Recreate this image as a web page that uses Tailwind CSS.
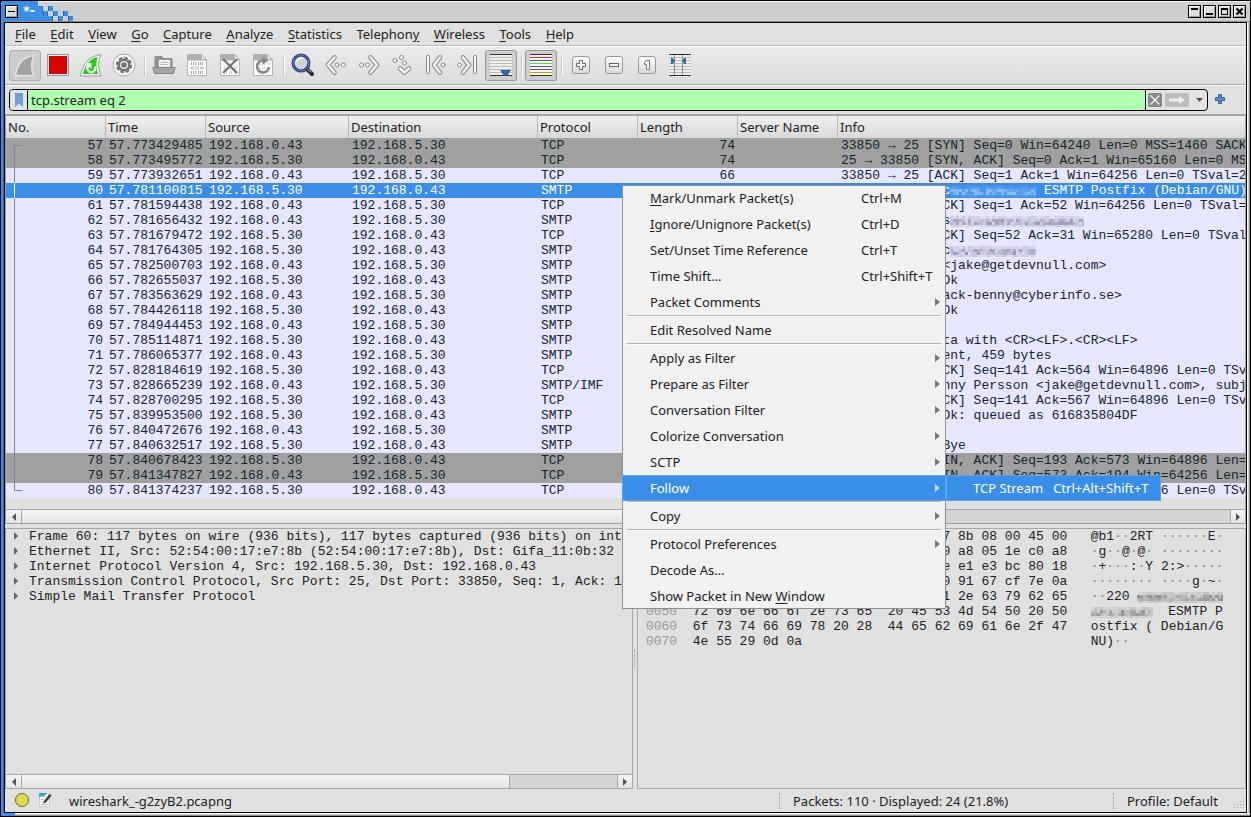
<!DOCTYPE html>
<html lang="en">
<head>
<meta charset="utf-8">
<title>*wireshark_-g2zyB2.pcapng</title>
<script src="https://cdn.jsdelivr.net/npm/@tailwindcss/browser@4"></script>
</head>
<body class="h-screen overflow-hidden bg-black font-['Noto_Sans',sans-serif] text-[13px] leading-[18px] text-[#222]">
<svg width="0" height="0" class="absolute">
  <defs>
    <linearGradient id="glass" x1="0" y1="0" x2="0" y2="1"><stop offset="0" stop-color="#fff"/><stop offset="1" stop-color="#d8d8d8"/></linearGradient>
    <symbol id="doc" viewBox="0 0 22 24"><path d="M1.500 1.500H15.500L20.500 6.500V22.500H1.500Z" fill="#fafafa" stroke="#b4b4b2"/><path d="M2 2H15.500V7H20V7.500H2Z" fill="#b0b0ae"/><path d="M15.500 1.500V6.500H20.500Z" fill="#e6e6e6" stroke="#b4b4b2"/></symbol>
  </defs>
</svg>
<div class="flex h-full flex-col border border-black bg-[#cecece]">

  <header class="flex h-[21px] shrink-0 items-stretch border-b border-b-[#888] bg-[#cecece] shadow-[inset_0_1px_0_#f4f4f4]">
    <div class="flex w-[37px] items-center bg-[#3a8ee8] pl-1">
      <button aria-label="Window menu" class="size-[13px] border border-black bg-[#ddd]"><svg class="block size-[11px]" viewBox="0 0 11 11"><path d="M.5 10.500V.5H10.500" stroke="#fff" fill="none"/><path d="M10.500 1V10.500H1" stroke="#999" fill="none"/><rect x="2" y="5" width="7" height="1"/></svg></button>
      <span class="pl-[5px] font-['DejaVu_Sans',sans-serif] text-[13px] leading-[18px] font-bold text-white">*-</span>
    </div>
    <svg width="36" height="20" viewBox="0 0 36 20" shape-rendering="crispEdges"><g fill="#3a8ee8"><path d="M0 5H5V10H10V15H15V20H0Z"/><rect x="10" y="5" width="5" height="5"/><rect x="15" y="10" width="5" height="5"/><rect x="20" y="15" width="5" height="5"/><rect x="25" y="10" width="5" height="5"/><rect x="30" y="15" width="5" height="5"/></g><path d="M10.500 5V10M15.500 10V15M20.500 15V20M25.500 10V15M30.500 15V20M5.500 11V15M4.500 5V10M9.500 11V15M14.500 15V20" stroke="#2a62a4"/></svg>
    <div class="ml-auto flex items-center gap-[2px] pr-1">
      <button aria-label="Shade" class="size-[13px] border border-black bg-[#ddd]"><svg class="block size-[11px]" viewBox="0 0 11 11"><path d="M.5 10.500V.5H10.500" stroke="#fff" fill="none"/><path d="M10.500 1V10.500H1" stroke="#999" fill="none"/><rect x="2" y="2" width="7" height="2"/></svg></button>
      <button aria-label="Minimize" class="size-[13px] border border-black bg-[#ddd]"><svg class="block size-[11px]" viewBox="0 0 11 11"><path d="M.5 10.500V.5H10.500" stroke="#fff" fill="none"/><path d="M10.500 1V10.500H1" stroke="#999" fill="none"/><rect x="2" y="7" width="7" height="2"/></svg></button>
      <button aria-label="Maximize" class="size-[13px] border border-black bg-[#ddd]"><svg class="block size-[11px]" viewBox="0 0 11 11"><path d="M.5 10.500V.5H10.500" stroke="#fff" fill="none"/><path d="M10.500 1V10.500H1" stroke="#999" fill="none"/><path d="M2 2H9V9H2ZM3 4V8H8V4Z" fill-rule="evenodd"/></svg></button>
      <button aria-label="Close" class="size-[13px] border border-black bg-[#ddd]"><svg class="block size-[11px]" viewBox="0 0 11 11"><path d="M.5 10.500V.5H10.500" stroke="#fff" fill="none"/><path d="M10.500 1V10.500H1" stroke="#999" fill="none"/><path d="M2.500 2.500L8.500 8.500M8.500 2.500L2.500 8.500" stroke="#000" stroke-width="2"/></svg></button>
    </div>
  </header>

  <div class="flex min-h-0 flex-1">
    <div class="w-[3px] shrink-0 border-r border-r-[#2a6cb8] bg-[#3a8ee8]"></div>
    <main class="flex min-w-0 flex-1 flex-col border border-black bg-[#e0e0e0]">

      <nav class="flex h-[23px] shrink-0 items-center border-b border-b-[#bdbdbd] pl-[3px]" aria-label="Main menu">
        <div class="flex w-[573px] justify-between">
        <button class="px-[7px]"><u class="underline-offset-2">F</u>ile</button>
        <button class="px-[7px]"><u class="underline-offset-2">E</u>dit</button>
        <button class="px-[7px]"><u class="underline-offset-2">V</u>iew</button>
        <button class="px-[7px]"><u class="underline-offset-2">G</u>o</button>
        <button class="px-[7px]"><u class="underline-offset-2">C</u>apture</button>
        <button class="px-[7px]"><u class="underline-offset-2">A</u>nalyze</button>
        <button class="px-[7px]"><u class="underline-offset-2">S</u>tatistics</button>
        <button class="px-[7px]">Telephon<u class="underline-offset-2">y</u></button>
        <button class="px-[7px]"><u class="underline-offset-2">W</u>ireless</button>
        <button class="px-[7px]"><u class="underline-offset-2">T</u>ools</button>
        <button class="px-[7px]"><u class="underline-offset-2">H</u>elp</button>
        </div>
      </nav>

      <div role="toolbar" class="flex h-[39px] shrink-0 items-center gap-px border-t border-b border-t-white border-b-[#a8a8a8] bg-linear-to-b from-[#ebebeb] to-[#dcdcdc] pl-1">
        <button aria-label="Start capture" class="grid h-[31px] w-8 place-items-center rounded-[3px] border border-[#b0b0b0] bg-[#cdcdcd]"><svg width="22" height="23" viewBox="0 0 22 23"><path d="M1.500 21.500C3 10 9 3 20 1.500C17 8 17 15 19.500 21.500Z" fill="#a3a3a3" stroke="#e4e4e4" stroke-width="1.600"/></svg></button>
        <button aria-label="Stop capture" class="grid h-[31px] w-8 place-items-center"><svg width="22" height="23" viewBox="0 0 22 23"><rect x=".5" y=".5" width="21" height="21" fill="#f2f2f2" stroke="#999"/><rect x="2" y="2" width="18" height="18" fill="#d90000"/></svg></button>
        <button aria-label="Restart capture" class="grid h-[31px] w-8 place-items-center"><svg width="24" height="25" viewBox="0 0 24 25"><path d="M1.500 23C3.500 11 10 3 22 1.500C19 8 19 15 22 23Z" fill="#f4f4f4" stroke="#999"/><path d="M4 21C6 12 11 5.500 18.500 4C17 9 17 15 19 21Z" fill="#1fcf11"/><path d="M9.300 12.500A4 4 0 1 0 16 13.500" fill="none" stroke="#fff" stroke-width="2.200"/><path d="M6.500 10H12.500V16Z" fill="#fff"/></svg></button>
        <button aria-label="Capture options" class="grid h-[31px] w-8 place-items-center"><svg width="24" height="25" viewBox="0 0 24 25"><circle cx="12" cy="12" r="11" fill="#f6f6f6" stroke="#aaa"/><circle cx="12" cy="12" r="7.200" fill="none" stroke="#737373" stroke-width="2" stroke-dasharray="3.650 2"/><circle cx="12" cy="12" r="5.300" fill="none" stroke="#737373" stroke-width="2.600"/><circle cx="12" cy="12" r="2.800" fill="#737373"/></svg></button>
        <span class="h-5 w-[6px] shrink-0"><i class="ml-[3px] block h-5 w-[2px] border-r border-l border-r-white border-l-[#c8c8c8]"></i></span>
        <button aria-label="Open file" class="grid h-[31px] w-8 place-items-center"><svg width="24" height="23" viewBox="0 0 24 23"><path d="M2.500 14V2H10L11.500 4H20.500V14Z" fill="#8e8e8c"/><rect x="6.500" y="5.500" width="12" height="10" fill="#f0f0f0" stroke="#a0a0a0"/><path d="M8.500 8.500H16.500M8.500 10.500H16.500" stroke="#bbb"/><path d="M.8 13.500H23.200L21.500 19.500H2.500Z" fill="#a6a6a4" stroke="#858583"/></svg></button>
        <button aria-label="Save file" class="grid h-[31px] w-8 place-items-center"><svg width="22" height="25" viewBox="0 0 22 25"><use href="#doc" width="22" height="24"/><g stroke="#a8a8a8" fill="none" stroke-width="3"><path d="M5 10.500H18" stroke-dasharray="1 1 1 1 1 2"/><path d="M4.500 15H18" stroke-dasharray="1 1 1 2"/><path d="M5 19.500H18" stroke-dasharray="1 1 1 1 1 2"/></g></svg></button>
        <button aria-label="Close file" class="grid h-[31px] w-8 place-items-center"><svg width="22" height="25" viewBox="0 0 22 25"><use href="#doc" width="22" height="24"/><path d="M5 15H18M5 19.500H18" stroke="#ccc" stroke-width="3" stroke-dasharray="1 1 1 2"/><path d="M4 6L18 20M18 6L4 20" stroke="#777" stroke-width="2.400"/></svg></button>
        <button aria-label="Reload file" class="grid h-[31px] w-8 place-items-center"><svg width="22" height="25" viewBox="0 0 22 25"><use href="#doc" width="22" height="24"/><path d="M5 11H18M5 15.500H18" stroke="#ccc" stroke-width="3" stroke-dasharray="1 1 1 2"/><path d="M11 7.500A6 6 0 1 0 17 14" fill="none" stroke="#858585" stroke-width="2.400"/><path d="M10.500 3.500L16.500 7.500L10.500 11.500Z" fill="#858585"/></svg></button>
        <span class="h-5 w-[6px] shrink-0"><i class="ml-[3px] block h-5 w-[2px] border-r border-l border-r-white border-l-[#c8c8c8]"></i></span>
        <button aria-label="Find packet" class="grid h-[31px] w-8 place-items-center"><svg width="24" height="25" viewBox="0 0 24 25"><path d="M15.500 15.500L21 21" stroke="#2b2b2b" stroke-width="4" stroke-linecap="round"/><path d="M15.500 15L20 19" stroke="#999" stroke-width="1.200"/><circle cx="10" cy="10" r="8" fill="#cfd2d8" stroke="#22397c" stroke-width="3"/><circle cx="10" cy="10" r="8" fill="none" stroke="#6683c9"/><path d="M5.500 9A5 5 0 0 1 12 5.500" stroke="#fff" fill="none" stroke-width="1.500"/></svg></button>
        <button aria-label="Previous packet" class="grid h-[31px] w-8 place-items-center"><svg width="24" height="25" viewBox="0 0 24 25" fill="none" stroke-linecap="round" stroke-linejoin="round"><path d="M10.500 4.500L4 12L10.500 19.500" stroke="#858585" stroke-width="4.500"/><path d="M10.500 4.500L4 12L10.500 19.500" stroke="#f4f4f4" stroke-width="2.600"/><g fill="#fff" stroke="#8c8c8c"><circle cx="13" cy="12" r="2"/><circle cx="19.500" cy="12" r="2"/></g></svg></button>
        <button aria-label="Next packet" class="grid h-[31px] w-8 place-items-center"><svg width="24" height="25" viewBox="0 0 24 25" fill="none" stroke-linecap="round" stroke-linejoin="round"><path d="M13.500 4.500L20 12L13.500 19.500" stroke="#858585" stroke-width="4.500"/><path d="M13.500 4.500L20 12L13.500 19.500" stroke="#f4f4f4" stroke-width="2.600"/><g fill="#fff" stroke="#8c8c8c"><circle cx="10.500" cy="12" r="2"/><circle cx="4.500" cy="12" r="2"/></g></svg></button>
        <button aria-label="Go to packet" class="grid h-[31px] w-8 place-items-center"><svg width="24" height="25" viewBox="0 0 24 25" fill="none" stroke-linecap="round" stroke-linejoin="round"><path d="M10 15.500L14.500 19.500L19 15.500" stroke="#858585" stroke-width="4.500"/><path d="M10 15.500L14.500 19.500L19 15.500" stroke="#f4f4f4" stroke-width="2.600"/><g fill="#fff" stroke="#8c8c8c"><circle cx="5" cy="7.500" r="2"/><circle cx="11.500" cy="4.500" r="2"/><circle cx="14.500" cy="10" r="2"/></g></svg></button>
        <button aria-label="First packet" class="grid h-[31px] w-8 place-items-center"><svg width="24" height="25" viewBox="0 0 24 25" fill="none" stroke-linecap="round" stroke-linejoin="round"><rect x="3.500" y="2.500" width="3" height="18" rx="1" fill="#f4f4f4" stroke="#858585"/><path d="M17 4.500L11 12L17 19.500" stroke="#858585" stroke-width="4.500"/><path d="M17 4.500L11 12L17 19.500" stroke="#f4f4f4" stroke-width="2.600"/><circle cx="20" cy="12" r="2" fill="#fff" stroke="#8c8c8c"/></svg></button>
        <button aria-label="Last packet" class="grid h-[31px] w-8 place-items-center"><svg width="24" height="25" viewBox="0 0 24 25" fill="none" stroke-linecap="round" stroke-linejoin="round"><rect x="17.500" y="2.500" width="3" height="18" rx="1" fill="#f4f4f4" stroke="#858585"/><path d="M7 4.500L13 12L7 19.500" stroke="#858585" stroke-width="4.500"/><path d="M7 4.500L13 12L7 19.500" stroke="#f4f4f4" stroke-width="2.600"/><circle cx="3.500" cy="12" r="2" fill="#fff" stroke="#8c8c8c"/></svg></button>
        <button aria-label="Auto scroll" aria-pressed="true" class="grid h-[31px] w-8 place-items-center rounded-[3px] border border-[#999] bg-[#cdcdcd]"><svg width="22" height="23" viewBox="0 0 22 23"><rect width="22" height="22" fill="#eeeeec"/><path d="M0 3.500H22M0 6.500H22M0 9.500H22M0 12.500H22M0 15.500H22M0 18.500H22" stroke="#babdb6"/><path d="M0 .5H22M0 21.500H22" stroke="#2e3436"/><path d="M10 16H21L17.500 21.500H13.500Z" fill="#3465a4"/></svg></button>
        <span class="h-5 w-[6px] shrink-0"><i class="ml-[3px] block h-5 w-[2px] border-r border-l border-r-white border-l-[#c8c8c8]"></i></span>
        <button aria-label="Colorize" aria-pressed="true" class="grid h-[31px] w-8 place-items-center rounded-[3px] border border-[#999] bg-[#cdcdcd]"><svg width="22" height="23" viewBox="0 0 22 23"><rect width="22" height="22" fill="#f4f4f2"/><path d="M0 .5H22M0 21.500H22" stroke="#2e3436"/><path d="M0 3.500H22" stroke="#ef2929"/><path d="M0 6.500H22" stroke="#3465a4"/><path d="M0 9.500H22" stroke="#73d216"/><path d="M0 12.500H22" stroke="#3465a4"/><path d="M0 15.500H22" stroke="#75507b"/><path d="M0 18.500H22" stroke="#c4a000"/></svg></button>
        <span class="h-5 w-[6px] shrink-0"><i class="ml-[3px] block h-5 w-[2px] border-r border-l border-r-white border-l-[#c8c8c8]"></i></span>
        <button aria-label="Zoom in" class="grid h-[31px] w-8 place-items-center"><svg width="20" height="21" viewBox="0 0 20 21"><rect x="1.500" y="1.500" width="17" height="17" rx="2.500" fill="url(#glass)" stroke="#999"/><path d="M8.500 5.500H11.500V8.500H14.500V11.500H11.500V14.500H8.500V11.500H5.500V8.500H8.500Z" fill="#fff" stroke="#666"/></svg></button>
        <button aria-label="Zoom out" class="grid h-[31px] w-8 place-items-center"><svg width="20" height="21" viewBox="0 0 20 21"><rect x="1.500" y="1.500" width="17" height="17" rx="2.500" fill="url(#glass)" stroke="#999"/><rect x="5.500" y="8.500" width="9" height="3" fill="#fff" stroke="#666"/></svg></button>
        <button aria-label="Normal size" class="grid h-[31px] w-8 place-items-center"><svg width="20" height="21" viewBox="0 0 20 21"><rect x="1.500" y="1.500" width="17" height="17" rx="2.500" fill="url(#glass)" stroke="#999"/><path d="M9.500 5.500H12.500V14.500H9.500V9.500H7.500V7.500Z" fill="#fff" stroke="#777"/></svg></button>
        <button aria-label="Resize columns" class="grid h-[31px] w-8 place-items-center"><svg width="22" height="23" viewBox="0 0 22 23"><rect width="22" height="22" fill="#eeeeec"/><path d="M0 3.500H22M0 6.500H22M0 9.500H22M0 12.500H22M0 15.500H22M0 18.500H22" stroke="#babdb6"/><path d="M0 .5H22M0 21.500H22" stroke="#2e3436"/><path d="M5.500 1V21M13.500 1V21" stroke="#888a85"/><path d="M2 4H3.500L6 6.500L3.500 10H2ZM17 4H15.500L13 6.500L15.500 10H17Z" fill="#3465a4"/></svg></button>
      </div>

      <div class="flex h-[30px] shrink-0 items-center border-t border-b border-t-white border-b-[#a8a8a8] pr-5 pl-1">
        <div class="flex h-[22px] min-w-0 flex-1 overflow-hidden rounded-[4px] border border-black bg-[#e3e3e3]">
          <button aria-label="Bookmarks" class="grid w-[18px] shrink-0 place-items-center border-r border-black bg-[#e2e2ea]"><svg width="8" height="14" viewBox="0 0 8 14"><path d="M0 0H8V14L4 10.500L0 14Z" fill="#729fcf"/></svg></button>
          <input aria-label="Display filter" value="tcp.stream eq 2" class="min-w-0 flex-1 bg-[#afffaf] pl-[3px] outline-none">
          <div class="flex w-[62px] shrink-0 items-center border-l border-black pl-[2px]">
            <button aria-label="Clear"><svg class="block" width="14" height="14" viewBox="0 0 14 14"><rect width="14" height="14" rx="1.500" fill="#888a85"/><path d="M2.500 2.500L11.500 11.500M11.500 2.500L2.500 11.500" stroke="#f4f4f2" stroke-width="1.300"/></svg></button>
            <button aria-label="Apply" class="ml-[3px]"><svg class="block" width="24" height="14" viewBox="0 0 24 14"><rect width="24" height="14" rx="2" fill="#bcbcba"/><path d="M4 5.500H14V3L20 7L14 11V8.500H4Z" fill="#eee"/></svg></button>
            <button aria-label="Recent filters" class="ml-[7px]"><svg class="block" width="7" height="4" viewBox="0 0 7 4"><path d="M0 0H7L3.500 4Z" fill="#555"/></svg></button>
          </div>
        </div>
        <button aria-label="Add filter button" class="ml-[6px] shrink-0"><svg class="block" width="12" height="14" viewBox="0 0 12 14"><path d="M4.500 1.500H7.500V4.500H10.500V7.500H7.500V10.500H4.500V7.500H1.500V4.500H4.500Z" fill="#5c87c0" stroke="#3465a4"/></svg></button>
      </div>

      <section class="relative shrink-0 border border-[#a0a0a0]" aria-label="Packet list">
        <table class="w-full table-fixed border-separate border-spacing-0">
          <colgroup><col class="w-[100px]"><col class="w-[100px]"><col class="w-[143px]"><col class="w-[189px]"><col class="w-[100px]"><col class="w-[100px]"><col class="w-[100px]"><col></colgroup>
          <thead class="bg-linear-to-b from-[#f0f0f0] to-[#d9d9d9]">
            <tr class="h-[22px] text-left">
              <th class="border-r border-[#b8b8b8] p-0 pl-[2px] font-normal">No.</th>
              <th class="border-r border-[#b8b8b8] p-0 pl-[2px] font-normal">Time</th>
              <th class="border-r border-[#b8b8b8] p-0 pl-[2px] font-normal">Source</th>
              <th class="border-r border-[#b8b8b8] p-0 pl-[2px] font-normal">Destination</th>
              <th class="border-r border-[#b8b8b8] p-0 pl-[2px] font-normal">Protocol</th>
              <th class="border-r border-[#b8b8b8] p-0 pl-[2px] font-normal">Length</th>
              <th class="border-r border-[#b8b8b8] p-0 pl-[2px] font-normal">Server Name</th>
              <th class="p-0 pl-[2px] font-normal">Info</th>
            </tr>
          </thead>
          <tbody id="packets" class="font-['Liberation_Mono',monospace] leading-[15px] text-[#12272e]"></tbody>
        </table>
        <svg class="absolute top-[22px] left-2" width="8" height="360" viewBox="0 0 8 360" fill="none" stroke="#7f888c"><path d="M8 7.500H.5V352.500H8"/><path d="M.5 45V60" stroke="#fff"/></svg>
        <div class="h-[11px]"></div>
        <div role="scrollbar" aria-label="Packet list scroll" aria-controls="packets" aria-valuenow="0" class="flex h-[14px] border-t border-[#a8a8a8] bg-[#d4d4d4]">
          <button aria-label="Left" class="grid w-4 place-items-center border-r border-[#a8a8a8] bg-linear-to-b from-[#f6f6f6] to-[#e2e2e2]"><svg width="4" height="8" viewBox="0 0 4 8"><path d="M4 0V8L0 4Z" fill="#555"/></svg></button>
          <div class="w-[70%] border-r border-[#a8a8a8] bg-linear-to-b from-[#f6f6f6] to-[#e2e2e2]"></div>
          <button aria-label="Right" class="ml-auto grid w-[15px] place-items-center border-l border-[#a8a8a8] bg-linear-to-b from-[#f6f6f6] to-[#e2e2e2]"><svg width="4" height="8" viewBox="0 0 4 8"><path d="M0 0V8L4 4Z" fill="#555"/></svg></button>
        </div>
      </section>

      <div class="h-1 shrink-0"></div>
      <div class="flex min-h-0 flex-1">
        <section class="flex min-w-0 flex-[628] flex-col overflow-hidden border border-[#a8a8a8]" aria-label="Packet details">
          <ul id="details" class="min-h-0 flex-1 overflow-hidden font-['Liberation_Mono',monospace] leading-[15px] whitespace-pre"></ul>
          <div role="scrollbar" aria-label="Details scroll" aria-controls="details" aria-valuenow="0" class="flex h-[14px] shrink-0 border-t border-[#a8a8a8] bg-[#d4d4d4]">
            <button aria-label="Left" class="grid w-4 place-items-center border-r border-[#a8a8a8] bg-linear-to-b from-[#f6f6f6] to-[#e2e2e2]"><svg width="4" height="8" viewBox="0 0 4 8"><path d="M4 0V8L0 4Z" fill="#555"/></svg></button>
            <div class="w-[78%] border-r border-[#a8a8a8] bg-linear-to-b from-[#f6f6f6] to-[#e2e2e2]"></div>
            <button aria-label="Right" class="ml-auto grid w-[15px] place-items-center border-l border-[#a8a8a8] bg-linear-to-b from-[#f6f6f6] to-[#e2e2e2]"><svg width="4" height="8" viewBox="0 0 4 8"><path d="M0 0V8L4 4Z" fill="#555"/></svg></button>
          </div>
        </section>
        <div class="flex w-1 shrink-0 items-center justify-center"><i class="block h-[18px] border-l border-dotted border-[#999]"></i></div>
        <section class="min-w-0 flex-[609] overflow-hidden border border-[#a8a8a8]" aria-label="Packet bytes">
          <div id="bytes" class="pl-2 font-['Liberation_Mono',monospace] leading-[15px] whitespace-pre"></div>
        </section>
      </div>

      <footer class="flex h-[23px] shrink-0 items-center pt-px">
        <div class="flex min-w-0 flex-1 items-center pl-[9px]">
          <button aria-label="Expert information"><svg class="block" width="16" height="16" viewBox="0 0 16 16"><circle cx="8" cy="7" r="6.500" fill="#dddc55" stroke="#66672e"/></svg></button>
          <button aria-label="Capture comment" class="ml-2"><svg class="block" width="14" height="16" viewBox="0 0 14 16"><path d="M1.500 .5H11.500V13.500H1.500Z" fill="#f6f6f4" stroke="#c8c8c6"/><path d="M1 0H9L6 3.500H3L1 4.500Z" fill="#3b9fd6"/><path d="M3 6.500H6M3 8.500H5M3 11.500H10" stroke="#bbb"/><path d="M6 8L11.500 1L13.500 2.500L8 9.500L5 10.500Z" fill="#3a3f41"/></svg></button>
          <span class="pl-[17px]">wireshark_-g2zyB2.pcapng</span>
        </div>
        <div class="flex w-[334px] items-center"><i class="block h-4 border-l border-dotted border-[#999]"></i><span class="pl-[13px]">Packets: 110 · Displayed: 24 (21.8%)</span></div>
        <div class="flex w-[133px] items-center"><i class="block h-4 border-l border-dotted border-[#999]"></i><span class="pl-[13px]">Profile: Default</span>
          <svg class="mt-1 mr-px ml-auto" width="11" height="11" viewBox="0 0 11 11" stroke="#a8a8a8" stroke-dasharray="1 2"><path d="M9 .5H11M6 3.500H11M3 6.500H11M0 9.500H11"/></svg></div>
      </footer>
    </main>
    <div class="w-[3px] shrink-0 border-r border-l border-r-[#888] border-l-white bg-[#cecece]"></div>
  </div>
  <div class="flex h-[3px] shrink-0 border-t border-b border-t-white border-b-[#888] bg-[#cecece]"><i class="-my-px block w-[14px] bg-[#3a8ee8]"></i></div>
</div>

<div role="menu" id="menu" class="absolute top-[185px] left-[622px] w-[324px] bg-[#f1f1f1] shadow-[inset_0_0_0_1px_#8f8f8f]"></div>
<div role="menu" class="absolute top-[475px] left-[946px] bg-[#3a8ee8] text-white">
  <button role="menuitem" class="flex h-[26px] items-center border border-[#5aa0ea] pr-3 pl-[26px]"><span>TCP Stream</span><span class="pl-[10px]">Ctrl+Alt+Shift+T</span></button>
</div>

<script>
const A = '192.168.0.43', B = '192.168.5.30';
const out = '33850 → 25 ', inn = '25 → 33850 ';
/* number, time, source, protocol, length, info, redacted width, text after redaction */
const packets = [
  [57,'57.773429485',A,'TCP',74,out+'[SYN] Seq=0 Win=64240 Len=0 MSS=1460 SACK'],
  [58,'57.773495772',B,'TCP',74,inn+'[SYN, ACK] Seq=0 Ack=1 Win=65160 Len=0 MS'],
  [59,'57.773932651',A,'TCP',66,out+'[ACK] Seq=1 Ack=1 Win=64256 Len=0 TSval=2'],
  [60,'57.781100815',B,'SMTP',117,'S: 220 mail1.c',86,' ESMTP Postfix (Debian/GNU)'],
  [61,'57.781594438',A,'TCP',66,out+'[ACK] Seq=1 Ack=52 Win=64256 Len=0 TSval='],
  [62,'57.781656432',A,'SMTP',96,'C: EHLO      s',134,''],
  [63,'57.781679472',B,'TCP',66,inn+'[ACK] Seq=52 Ack=31 Win=65280 Len=0 TSval'],
  [64,'57.781764305',B,'SMTP',209,'S: 250-mail1.c',86,''],
  [65,'57.782500703',A,'SMTP',101,'C: MAIL FROM:<jake@getdevnull.com>'],
  [66,'57.782655037',B,'SMTP',80,'S: 250 2.1.0 Ok'],
  [67,'57.783563629',A,'SMTP',104,'C: RCPT TO:<jack-benny@cyberinfo.se>'],
  [68,'57.784426118',B,'SMTP',80,'S: 250 2.1.5 Ok'],
  [69,'57.784944453',A,'SMTP',72,'C: DATA'],
  [70,'57.785114871',B,'SMTP',103,'S: 354 End data with <CR><LF>.<CR><LF>'],
  [71,'57.786065377',A,'SMTP',525,'C: DATA fragment, 459 bytes'],
  [72,'57.828184619',B,'TCP',66,inn+'[ACK] Seq=141 Ack=564 Win=64896 Len=0 TSv'],
  [73,'57.828665239',A,'SMTP/IMF',69,'from: Jack Benny Persson <jake@getdevnull.com>, subj'],
  [74,'57.828700295',B,'TCP',66,inn+'[ACK] Seq=141 Ack=567 Win=64896 Len=0 TSv'],
  [75,'57.839953500',B,'SMTP',102,'S: 250 2.0.0 Ok: queued as 616835804DF'],
  [76,'57.840472676',A,'SMTP',72,'C: QUIT'],
  [77,'57.840632517',B,'SMTP',81,'S: 221 2.0.0 Bye'],
  [78,'57.840678423',B,'TCP',66,inn+'[FIN, ACK] Seq=193 Ack=573 Win=64896 Len='],
  [79,'57.841347827',A,'TCP',66,out+'[FIN, ACK] Seq=573 Ack=194 Win=64256 Len='],
  [80,'57.841374237',B,'TCP',66,inn+'[ACK] Seq=194 Ack=574 Win=64896 Len=0 TSv']
];
const esc = s => s.replace(/&/g,'&amp;').replace(/</g,'&lt;');

/* Pixelated block that covers redacted host names. */
function mosaic(width, color, seed) {
  let s = '', n = seed;
  for (let y = 3; y < 14; y += 3)
    for (let x = 0; x < width; x += 3) {
      n = (n * 16807) % 2147483647;
      const r = n / 2147483647, edge = y === 3 || y === 12;
      const a = edge ? 0.04 + r * 0.12 : 0.08 + r * 0.34;
      s += `<rect x="${x}" y="${y}" width="3" height="${y === 12 ? 2 : 3}" fill="${color}" fill-opacity="${a.toFixed(2)}"/>`;
    }
  return `<svg class="inline-block align-top" width="${width}" height="15" viewBox="0 0 ${width} 15">${s}</svg>`;
}
document.getElementById('packets').innerHTML = packets.map(([no,t,src,pr,len,info,red,tail]) => {
  const cls = no === 60 ? 'bg-[#3a8ee8] text-white' : [57,58,78,79].includes(no) ? 'bg-[#a0a0a0]' : 'bg-[#e7e6ff]';
  const m = red ? mosaic(red, no === 60 ? '#fff' : '#334', no * 7919) + tail : '';
  return `<tr class="${cls}"><td class="h-[15px] p-0 pr-[3px] text-right">${no}</td><td class="p-0 pl-[3px]">${t}</td><td class="p-0 pl-[3px]">${src}</td><td class="p-0 pl-[3px]">${src===A?B:A}</td><td class="p-0 pl-[3px]">${pr}</td><td class="p-0 pr-[3px] text-right">${len}</td><td class="p-0"></td><td class="overflow-hidden p-0 pl-[3px] whitespace-pre">${esc(info)}${m}</td></tr>`;
}).join('');

document.getElementById('details').innerHTML = [
  'Frame 60: 117 bytes on wire (936 bits), 117 bytes captured (936 bits) on int',
  'Ethernet II, Src: 52:54:00:17:e7:8b (52:54:00:17:e7:8b), Dst: Gifa_11:0b:32',
  'Internet Protocol Version 4, Src: 192.168.5.30, Dst: 192.168.0.43',
  'Transmission Control Protocol, Src Port: 25, Dst Port: 33850, Seq: 1, Ack: 1',
  'Simple Mail Transfer Protocol'
].map(s => `<li class="flex items-center pl-2"><svg class="mr-[11px] shrink-0" width="4" height="9" viewBox="0 0 4 9"><path d="M0 0V8L4 4Z" fill="#666"/></svg>${s}</li>`).join('');

/* hex columns and their text; '%' marks redacted characters */
const dump = [
  ['40 62 31 11 0b 32 52 54  00 17 e7 8b 08 00 45 00','@b1··2RT ······E·'],
  ['00 67 b3 1a 40 00 40 06  01 e0 c0 a8 05 1e c0 a8','·g··@·@· ········'],
  ['00 2b 00 19 84 3a d6 59  32 3a 3e e1 e3 bc 80 18','·+···:·Y 2:>·····'],
  ['01 fd 86 dc 00 00 01 01  08 0a e0 91 67 cf 7e 0a','········ ····g·~·'],
  ['8f c6 32 32 30 20 6d 61  69 6c 31 2e 63 79 62 65','··220 %%%%%%%%%%%'],
  ['72 69 6e 66 6f 2e 73 65  20 45 53 4d 54 50 20 50','%%%%%%%%  ESMTP P'],
  ['6f 73 74 66 69 78 20 28  44 65 62 69 61 6e 2f 47','ostfix ( Debian/G'],
  ['4e 55 29 0d 0a','NU)··']
];
document.getElementById('bytes').innerHTML = dump.map(([h,a],i) => {
  const t = esc(a).replace(/·+/g, d => `<span class="text-[#888]">${d}</span>`)
    .replace(/%+/, d => mosaic(d.length === 8 ? 62 : 86, '#222', 31 + i * 977));
  return `<div><span class="text-[#999]">00${i}0</span>  ${h.padEnd(51)}${t}</div>`;
}).join('');

/* label, shortcut ('>' opens a submenu); '-' is a separator */
const u = c => `<u class="underline-offset-2">${c}</u>`;
const items = [
  [u('M')+'ark/Unmark Packet(s)','Ctrl+M'],[u('I')+'gnore/Unignore Packet(s)','Ctrl+D'],['Set/Unset Time Reference','Ctrl+T'],['Time Shift…','Ctrl+Shift+T'],['Packet Comments','>'],'-',
  ['Edit Resolved Name',''],'-',
  ['Apply as Filter','>'],['Prepare as Filter','>'],['Conversation Filter','>'],['Colorize Conversation','>'],['SCTP','>'],['Follow','>'],'-',
  ['Copy','>'],'-',
  ['Protocol Preferences','>'],['Decode As…',''],['Show Packet in New '+u('W')+'indow','']
];
document.getElementById('menu').innerHTML = items.map(it => {
  if (it === '-') return '<div role="separator" class="mx-[5px] h-[2px] border-t border-b border-t-[#b4b4b4] border-b-white"></div>';
  const on = it[0] === 'Follow';
  const right = it[1] === '>' ? `<svg class="mr-[6px] ml-auto" width="5" height="8" viewBox="0 0 5 8"><path d="M0 0V8L5 4Z" fill="${on ? '#b9d9fa' : '#777'}"/></svg>` : `<span>${it[1]}</span>`;
  return `<button role="menuitem" class="flex h-[26px] w-full items-center pl-7 text-left ${on ? 'bg-[#3a8ee8] text-white shadow-[inset_0_0_0_1px_#5aa0ea]' : ''}"><span class="w-[211px] whitespace-nowrap">${it[0]}</span>${right}</button>`;
}).join('');
</script>
</body>
</html>
